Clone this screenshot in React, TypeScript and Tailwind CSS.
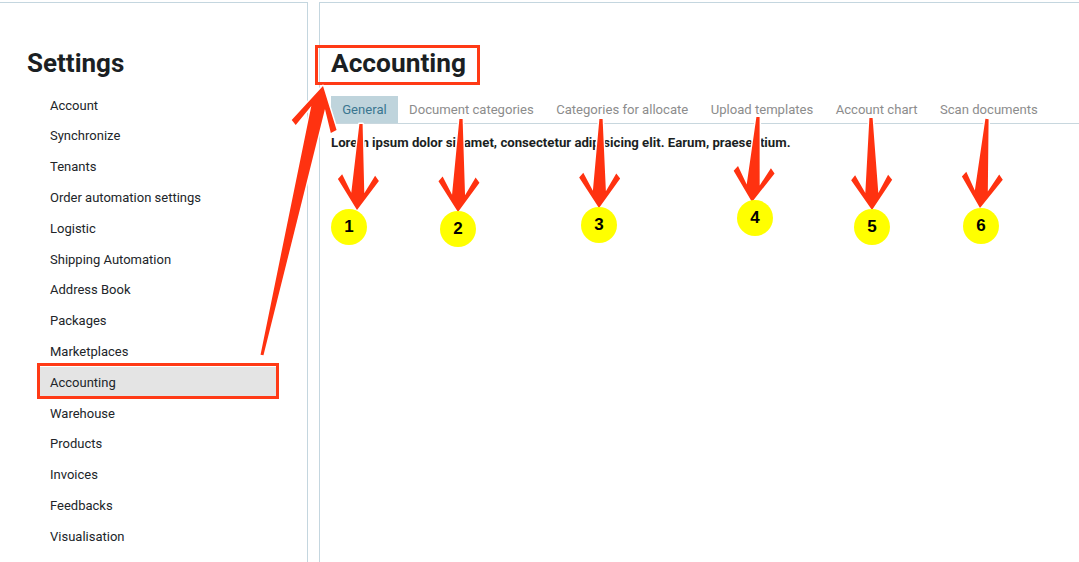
import React from "react";

const items = [
  "Account",
  "Synchronize",
  "Tenants",
  "Order automation settings",
  "Logistic",
  "Shipping Automation",
  "Address Book",
  "Packages",
  "Marketplaces",
  "Accounting",
  "Warehouse",
  "Products",
  "Invoices",
  "Feedbacks",
  "Visualisation",
  "Notifications",
];

const tabs = [
  "General",
  "Document categories",
  "Categories for allocate",
  "Upload templates",
  "Account chart",
  "Scan documents",
];

type Arrow = { x1: number; y1: number; x2: number; y2: number; big?: boolean };

const arrows: Arrow[] = [
  { x1: 361, y1: 124, x2: 357, y2: 210 },
  { x1: 461, y1: 119, x2: 458, y2: 212 },
  { x1: 601, y1: 119, x2: 599, y2: 208 },
  { x1: 758, y1: 117, x2: 752, y2: 202 },
  { x1: 871, y1: 118, x2: 872, y2: 210 },
  { x1: 987, y1: 119, x2: 980, y2: 208 },
  { x1: 262, y1: 355, x2: 323, y2: 86, big: true },
];

const circles = [
  { n: "1", x: 349, y: 227 },
  { n: "2", x: 458, y: 229 },
  { n: "3", x: 599, y: 225 },
  { n: "4", x: 755, y: 218 },
  { n: "5", x: 872, y: 227 },
  { n: "6", x: 981, y: 226 },
];

function arrowPoints(L: number, big?: boolean) {
  if (big) {
    return [
      [-1.5, 0],
      [1.5, 0],
      [7, L - 22],
      [18, L - 44],
      [23, L - 40],
      [0, L],
      [-23, L - 40],
      [-18, L - 44],
      [-7, L - 22],
    ];
  }
  return [
    [-1.6, 0],
    [1.6, 0],
    [6.5, L - 17],
    [16.5, L - 35],
    [20.5, L - 30],
    [0, L],
    [-20.5, L - 30],
    [-16.5, L - 35],
    [-6.5, L - 17],
  ];
}

function Arrows() {
  return (
    <svg
      className="absolute left-0 top-0 pointer-events-none"
      width={1079}
      height={562}
      viewBox="0 0 1079 562"
    >
      {arrows.map((a, i) => {
        const dx = a.x2 - a.x1;
        const dy = a.y2 - a.y1;
        const L = Math.sqrt(dx * dx + dy * dy);
        const ang = (Math.atan2(-dx, dy) * 180) / Math.PI;
        const pts = arrowPoints(L, a.big)
          .map((p) => p.join(","))
          .join(" ");
        return (
          <polygon
            key={i}
            points={pts}
            transform={`translate(${a.x1} ${a.y1}) rotate(${ang})`}
            fill="#ff3210"
            stroke="#ffffff"
            strokeWidth={3}
            strokeLinejoin="round"
            paintOrder="stroke"
          />
        );
      })}
    </svg>
  );
}

export default function App() {
  return (
    <div
      className="relative w-[1079px] h-[562px] overflow-hidden bg-white flex pt-[2px]"
      style={{ fontFamily: "Roboto, 'Noto Sans', Arial, sans-serif" }}
    >
      {/* Left panel */}
      <div className="w-[308px] shrink-0 border-t border-r border-[#c4d6df] pt-[44px] pl-[27px]">
        <h1 className="text-[26px] leading-[32px] font-bold text-[#1b1f23]">Settings</h1>
        <ul className="mt-[11px] ml-[13px] w-[238px]">
          {items.map((it) => (
            <li
              key={it}
              className={
                "h-[30.8px] flex items-center pl-[10px] text-[13px] text-[#212529] " +
                (it === "Accounting" ? "bg-[#e4e4e4]" : "")
              }
            >
              {it}
            </li>
          ))}
        </ul>
      </div>

      {/* Right panel */}
      <div className="flex-1 ml-[11px] border-t border-l border-[#c4d6df] pt-[44px] pl-[11px]">
        <h2 className="text-[26.3px] leading-[32px] font-bold text-[#1b1f23]">Accounting</h2>
        <div className="mt-[17px] flex border-b border-[#c8d7de] h-[28px]">
          {tabs.map((t, i) => (
            <div
              key={t}
              className={
                "h-[27px] px-[11.2px] flex items-center text-[13.1px] " +
                (i === 0 ? "bg-[#bfd4dc] text-[#3a7690]" : "text-[#8c8c8c]")
              }
            >
              {t}
            </div>
          ))}
        </div>
        <p className="mt-[10px] text-[13.2px] leading-[17px] font-bold text-[#1b1f23]">
          Lorem ipsum dolor sit amet, consectetur adipisicing elit. Earum, praesentium.
        </p>
      </div>

      {/* Annotation boxes */}
      <div className="absolute left-[37px] top-[363px] w-[242px] h-[36px] border-[3px] border-[#ff3a16] pointer-events-none" />
      <div className="absolute left-[315px] top-[45px] w-[165px] h-[40px] border-[3px] border-[#ff3a16] pointer-events-none" />

      <Arrows />

      {circles.map((c) => (
        <div
          key={c.n}
          className="absolute w-[36px] h-[36px] rounded-full bg-[#ffff00] flex items-center justify-center text-[17px] font-bold text-black"
          style={{ left: c.x - 18, top: c.y - 18, fontFamily: "'Liberation Sans', Arial, sans-serif" }}
        >
          {c.n}
        </div>
      ))}
    </div>
  );
}
